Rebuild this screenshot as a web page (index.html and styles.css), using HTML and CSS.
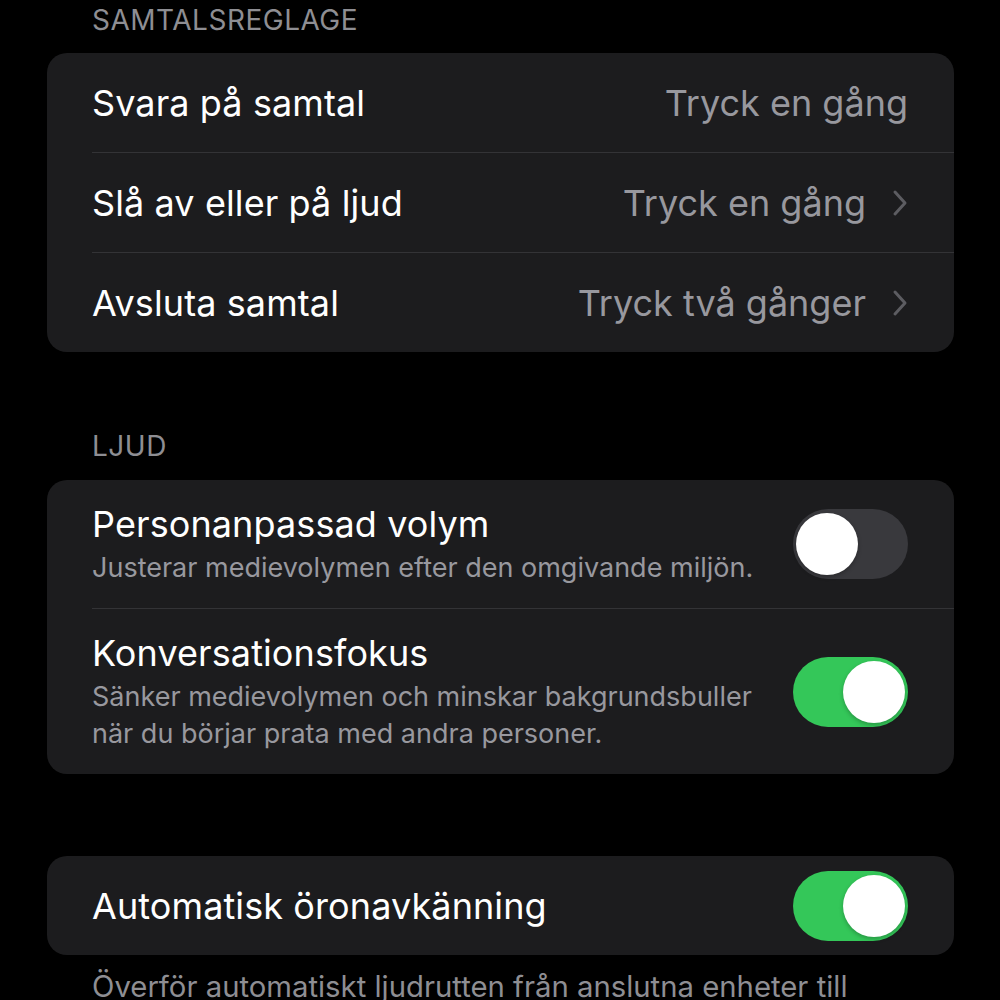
FILE: index.html
```html
<!DOCTYPE html>
<html lang="sv">
<head>
<meta charset="utf-8">
<link rel="stylesheet" href="styles.css">
</head>
<body>
<div class="page">
  <div class="section-header first">SAMTALSREGLAGE</div>
  <div class="card">
    <div class="row">
      <span class="title">Svara på samtal</span>
      <span class="value">Tryck en gång</span>
    </div>
    <div class="row">
      <span class="title">Slå av eller på ljud</span>
      <span class="value">Tryck en gång</span>
      <svg class="chev" viewBox="0 0 16 28"><path d="M3 3 L13 14 L3 25" fill="none" stroke="currentColor" stroke-width="3" stroke-linecap="round" stroke-linejoin="round"/></svg>
    </div>
    <div class="row">
      <span class="title">Avsluta samtal</span>
      <span class="value">Tryck två gånger</span>
      <svg class="chev" viewBox="0 0 16 28"><path d="M3 3 L13 14 L3 25" fill="none" stroke="currentColor" stroke-width="3" stroke-linecap="round" stroke-linejoin="round"/></svg>
    </div>
  </div>

  <div class="section-header">LJUD</div>
  <div class="card">
    <div class="row tall">
      <div class="text">
        <div class="title">Personanpassad volym</div>
        <div class="sub">Justerar medievolymen efter den omgivande miljön.</div>
      </div>
      <div class="toggle off"><div class="knob"></div></div>
    </div>
    <div class="row tall two">
      <div class="text">
        <div class="title">Konversationsfokus</div>
        <div class="sub">Sänker medievolymen och minskar bakgrundsbuller<br>när du börjar prata med andra personer.</div>
      </div>
      <div class="toggle on"><div class="knob"></div></div>
    </div>
  </div>

  <div class="card third">
    <div class="row">
      <span class="title">Automatisk öronavkänning</span>
      <div class="toggle on"><div class="knob"></div></div>
    </div>
  </div>
  <div class="footer">Överför automatiskt ljudrutten från anslutna enheter till</div>
</div>
</body>
</html>
```
FILE: styles.css
```css
html, body {
  margin: 0;
  padding: 0;
  background: #000;
}
body {
  font-family: Inter, "Liberation Sans", sans-serif;
  color: #fff;
  width: 1000px;
  height: 1000px;
  overflow: hidden;
}
.page {
  padding: 0 46px 0 47px;
}
.section-header {
  color: #8e8e93;
  font-size: 28px;
  letter-spacing: 0.5px;
  padding-left: 45px;
  height: 30px;
  line-height: 30px;
  margin-top: 79px;
  margin-bottom: 19px;
}
.section-header.first {
  margin-top: 5px;
  margin-bottom: 18px;
}
.card {
  background: #1c1c1e;
  border-radius: 20px;
  overflow: hidden;
}
.card.third {
  margin-top: 82px;
}
.row {
  display: flex;
  align-items: center;
  margin-left: 45px;
  padding-right: 46px;
  height: 100px;
  border-top: 1px solid #333336;
  box-sizing: border-box;
}
.row:first-child {
  border-top: none;
  height: 99px;
}
.row.tall {
  height: 128px;
}
.row.tall.two {
  height: 166px;
}
.title {
  font-size: 36px;
  color: #fff;
  flex: 1;
  letter-spacing: 0.1px;
}
.value {
  font-size: 36px;
  color: #98989e;
  letter-spacing: 0;
}
.chev {
  width: 16px;
  height: 28px;
  color: #5c5c61;
  margin-left: 26px;
}
.text {
  flex: 1;
}
.text .title {
  line-height: 42px;
}
.sub {
  font-size: 27px;
  color: #98989e;
  line-height: 37px;
  margin-top: 4px;
}
.toggle {
  width: 115px;
  height: 70px;
  border-radius: 35px;
  position: relative;
  flex: none;
}
.toggle.off {
  background: #39393d;
}
.toggle.on {
  background: #34c759;
}
.knob {
  position: absolute;
  top: 4px;
  width: 62px;
  height: 62px;
  border-radius: 50%;
  background: #fff;
  box-shadow: 0 2px 4px rgba(0,0,0,0.25);
}
.toggle.off .knob { left: 3px; }
.toggle.on .knob { right: 3px; }
.footer {
  color: #8e8e93;
  font-size: 29.3px;
  padding-left: 45px;
  margin-top: 14px;
  white-space: nowrap;
}
```
